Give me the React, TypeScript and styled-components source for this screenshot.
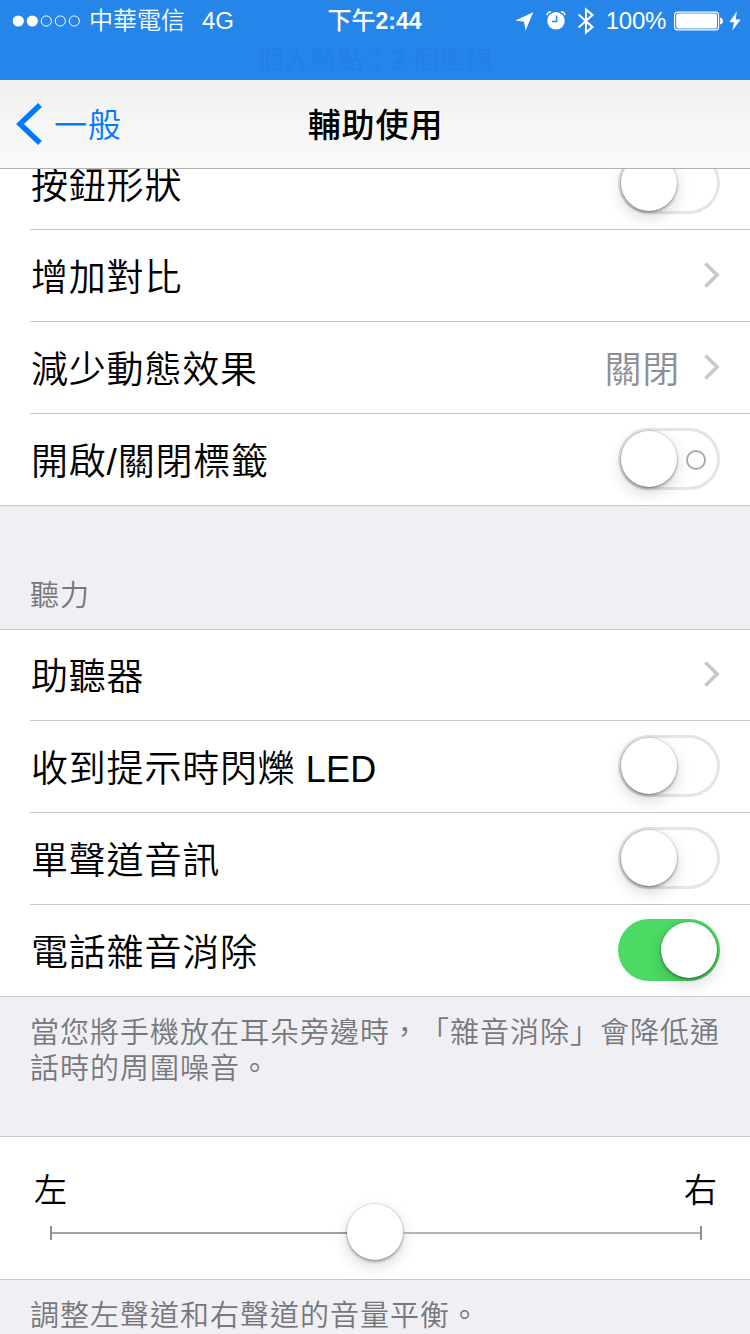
import React from "react";
import styled, { createGlobalStyle } from "styled-components";

const GlobalStyle = createGlobalStyle`
  * { box-sizing: border-box; }
  html, body { margin: 0; padding: 0; overflow: hidden; }
  body {
    background: #efeff4;
    color: #000;
    font-family: "Liberation Sans", "Noto Sans CJK TC", sans-serif;
    font-weight: 350;
    text-spacing-trim: space-all;
  }
`;

const Screen = styled.div`
  width: 750px;
  height: 1334px;
  overflow: hidden;
  background: #efeff4;
`;

const Top = styled.header`
  position: relative;
  z-index: 2;
`;

const StatusArea = styled.div`
  height: 80px;
  background: #2585e9;
  color: #fff;
`;

const StatusBar = styled.div`
  display: grid;
  grid-template-columns: 1fr auto 1fr;
  align-items: center;
  height: 41px;
  padding: 0 9px 0 12px;
  font-size: 24px;
  line-height: 38px;
`;

const StatusSide = styled.div<{ $end?: boolean }>`
  display: flex;
  align-items: center;
  justify-content: ${(p) => (p.$end ? "flex-end" : "flex-start")};
  height: 41px;
  white-space: nowrap;
`;

const Signal = styled.svg`
  display: block;
  margin-right: 7px;
`;

const Carrier = styled.span`
  margin-right: 17px;
`;

const StatusText = styled.span`
  padding-top: 1px;
`;

const Clock = styled.div`
  padding-top: 1px;
  font-weight: 500;
  transform: translateX(-2px);
  b { font-weight: 700; font-size: 23px; }
`;

const Glyph = styled.svg<{ $gap: number }>`
  display: block;
  flex: none;
  margin-right: ${(p) => p.$gap}px;
`;

const Percent = styled.span`
  margin-right: 8px;
  padding-top: 1px;
  letter-spacing: -0.3px;
`;

const Hotspot = styled.div`
  height: 36px;
  line-height: 38px;
  text-align: center;
  font-size: 26px;
  letter-spacing: 0.6px;
  color: #2280e3;
`;

const NavBar = styled.nav`
  display: grid;
  grid-template-columns: 1fr auto 1fr;
  align-items: center;
  height: 89px;
  padding: 0 16px;
  border-bottom: 1px solid #b2b2b2;
  background: linear-gradient(#efefef, #f6f6f6 50%, #f9f9f9);
`;

const Back = styled.div`
  display: flex;
  align-items: center;
  color: #007aff;
  font-size: 33px;
  letter-spacing: 1px;
  line-height: 80px;
`;

const BackText = styled.span`
  padding-top: 3px;
`;

const BackIcon = styled.svg`
  display: block;
  margin-right: 11px;
`;

const Title = styled.h1`
  margin: 0;
  padding: 3px 0 0 1px;
  font-size: 33px;
  font-weight: 500;
  letter-spacing: 0.9px;
  line-height: 80px;
`;

const Content = styled.main`
  margin-top: -31px;
`;

const Group = styled.section<{ $first?: boolean }>`
  background: #fff;
  border-top: ${(p) => (p.$first ? "0" : "1px solid #c8c7cc")};
  border-bottom: 1px solid #c8c7cc;
`;

const Row = styled.div<{ $short?: boolean }>`
  display: flex;
  align-items: center;
  justify-content: space-between;
  height: ${(p) => (p.$short ? 91 : 92)}px;
  margin-left: 30px;
  padding: 0 30px ${(p) => (p.$short ? 2 : 1)}px 0;
  border-bottom: 1px solid #c8c7cc;
  &:last-child { height: 91px; border-bottom: 0; }
`;

const Label = styled.span`
  padding: 7px 0 0 1px;
  font-size: 37px;
  letter-spacing: 0.8px;
  line-height: 81px;
  white-space: nowrap;
`;

const Latin = styled.span`
  font-size: 36px;
  letter-spacing: 0.2px;
`;

const Detail = styled.span`
  display: flex;
  align-items: center;
  color: #8e8e93;
  font-size: 37px;
  letter-spacing: 0.8px;
  line-height: 82px;
`;

const DetailText = styled.span`
  padding-top: 7px;
`;

const Chevron = styled.svg`
  display: block;
  margin: 0 -1px 0 23px;
`;

const Track = styled.span<{ $on?: boolean }>`
  display: flex;
  align-items: center;
  justify-content: ${(p) => (p.$on ? "flex-end" : "flex-start")};
  width: 102px;
  height: 62px;
  padding: 0 3px;
  border-radius: 31px;
  background: ${(p) => (p.$on ? "#4cd964" : "#fff")};
  box-shadow: ${(p) => (p.$on ? "none" : "inset 0 0 0 3px #e5e5e5")};
`;

const Knob = styled.span`
  flex: none;
  width: 56px;
  height: 56px;
  border-radius: 50%;
  background: #fff;
  box-shadow: 0 0 1px 1px rgba(0, 0, 0, 0.1), 0 2px 3px rgba(0, 0, 0, 0.28),
    0 6px 16px rgba(0, 0, 0, 0.16);
`;

const OffMark = styled.span`
  width: 20px;
  height: 20px;
  margin: 2px 0 0 9px;
  border: 2px solid #a9a9a9;
  border-radius: 50%;
`;

const SectionTitle = styled.h2`
  height: 123px;
  margin: 0;
  padding: 72px 30px 0 30px;
  color: #77777c;
  font-size: 29px;
  font-weight: 350;
  letter-spacing: 1px;
  line-height: 36px;
`;

const Footnote = styled.p<{ $height: number }>`
  height: ${(p) => p.$height}px;
  margin: 0;
  padding: 18px 0 0 30px;
  color: #77777c;
  font-size: 29px;
  letter-spacing: 1px;
  line-height: 36px;
  white-space: nowrap;
`;

const Balance = styled.div`
  height: 142px;
  padding: 31px 33px 0 34px;
`;

const Sides = styled.div`
  display: flex;
  justify-content: space-between;
  font-size: 33px;
  line-height: 46px;
`;

const Slider = styled.div`
  display: flex;
  align-items: center;
  height: 58px;
  margin: -11px 15px 0 16px;
`;

const Rail = styled.span<{ $side: "left" | "right" }>`
  display: flex;
  flex: ${(p) => (p.$side === "left" ? "0 0 297px" : "1")};
  align-items: center;
  justify-content: ${(p) => (p.$side === "left" ? "flex-start" : "flex-end")};
  height: 2px;
  margin-top: 2px;
  background: ${(p) => (p.$side === "left" ? "#a0a0a0" : "#b4b4b4")};
  &::before {
    content: "";
    width: 2px;
    height: 14px;
    background: #909090;
  }
`;

function Toggle({ on, mark }: { on?: boolean; mark?: boolean }) {
  return (
    <Track $on={on}>
      <Knob />
      {mark && <OffMark />}
    </Track>
  );
}

function Disclosure() {
  return (
    <Chevron width="18" height="28" viewBox="0 0 18 28">
      <path d="M2.4 2.5 14.1 14 2.4 25.5" fill="none" stroke="#c7c7cc" strokeWidth="3.6" />
    </Chevron>
  );
}

export default function App() {
  return (
    <Screen>
      <GlobalStyle />
      <Top>
        <StatusArea>
          <StatusBar>
            <StatusSide>
              <Signal width="70" height="12" viewBox="0 0 70 12">
                {[0, 1, 2, 3, 4].map((i) => (
                  <circle
                    key={i}
                    cx={6.3 + i * 14}
                    cy="6"
                    r={i < 2 ? 5.6 : 5.1}
                    fill={i < 2 ? "#fff" : "none"}
                    stroke={i < 2 ? "none" : "#fff"}
                  />
                ))}
              </Signal>
              <Carrier>中華電信</Carrier>
              <StatusText>4G</StatusText>
            </StatusSide>
            <Clock>
              下午<b>2:44</b>
            </Clock>
            <StatusSide $end>
              <Glyph $gap={12} width="19" height="20" viewBox="0 0 19 20">
                <path d="M18.3 1.2 0.3 9.6 9 10.8 10.6 19.4Z" fill="#fff" />
              </Glyph>
              <Glyph $gap={11} width="20" height="20" viewBox="0 0 20 20">
                <circle cx="10" cy="9.8" r="8.8" fill="#fff" />
                <path d="M10.6 4.5V10.4H6" fill="none" stroke="#2585e9" strokeWidth="1.5" />
                <path d="M1 4.3Q1.2 0.9 5 0.7M19 4.3Q18.8 0.9 15 0.7" fill="none" stroke="#fff" strokeWidth="1.4" />
              </Glyph>
              <Glyph $gap={11} width="18" height="28" viewBox="0 0 18 28">
                <path d="M1.5 7.5 15.5 20 9 25.5V2.5L15.5 8 1.5 20.5" fill="none" stroke="#fff" strokeWidth="2.1" />
              </Glyph>
              <Percent>100%</Percent>
              <Glyph $gap={6} width="49" height="20" viewBox="0 0 49 20">
                <rect x="0.6" y="1.1" width="44" height="17.8" rx="3" fill="none" stroke="#fff" strokeWidth="1.1" />
                <rect x="2.2" y="2.6" width="40.8" height="14.8" rx="1.8" fill="#fff" />
                <path d="M46 6.5Q49 7 49 10T46 13.5Z" fill="#fff" />
              </Glyph>
              <Glyph $gap={0} width="12" height="20" viewBox="0 0 12 20">
                <path d="M7.8 0.2 0.3 11.2H5L3.3 19.7 11.7 8.5H6.8Z" fill="#fff" />
              </Glyph>
            </StatusSide>
          </StatusBar>
          <Hotspot>個人熱點：2 個連線</Hotspot>
        </StatusArea>
        <NavBar>
          <Back>
            <BackIcon width="27" height="42" viewBox="0 0 27 42">
              <path d="M24 2 4 21 24 40" fill="none" stroke="#007aff" strokeWidth="5.4" />
            </BackIcon>
            <BackText>一般</BackText>
          </Back>
          <Title>輔助使用</Title>
          <span />
        </NavBar>
      </Top>
      <Content>
        <Group $first>
          <Row>
            <Label>按鈕形狀</Label>
            <Toggle />
          </Row>
          <Row>
            <Label>增加對比</Label>
            <Disclosure />
          </Row>
          <Row>
            <Label>減少動態效果</Label>
            <Detail>
              <DetailText>關閉</DetailText>
              <Disclosure />
            </Detail>
          </Row>
          <Row>
            <Label>開啟/關閉標籤</Label>
            <Toggle mark />
          </Row>
        </Group>
        <SectionTitle>聽力</SectionTitle>
        <Group>
          <Row $short>
            <Label>助聽器</Label>
            <Disclosure />
          </Row>
          <Row>
            <Label>
              收到提示時閃爍<Latin> LED</Latin>
            </Label>
            <Toggle />
          </Row>
          <Row>
            <Label>單聲道音訊</Label>
            <Toggle />
          </Row>
          <Row>
            <Label>電話雜音消除</Label>
            <Toggle on />
          </Row>
        </Group>
        <Footnote $height={139}>
          當您將手機放在耳朵旁邊時，「雜音消除」會降低通
          <br />
          話時的周圍噪音。
        </Footnote>
        <Group>
          <Balance>
            <Sides>
              <span>左</span>
              <span>右</span>
            </Sides>
            <Slider>
              <Rail $side="left" />
              <Knob />
              <Rail $side="right" />
            </Slider>
          </Balance>
        </Group>
        <Footnote $height={80}>調整左聲道和右聲道的音量平衡。</Footnote>
      </Content>
    </Screen>
  );
}
